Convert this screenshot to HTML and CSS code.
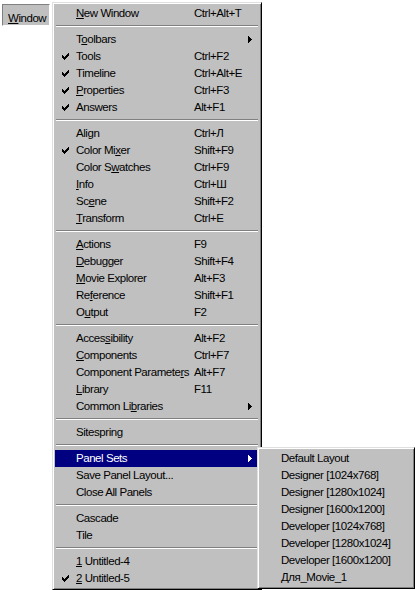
FILE: index.html
```html
<!DOCTYPE html>
<html>
<head>
<meta charset="utf-8">
<link rel="stylesheet" href="styles.css">
</head>
<body>
<div class="screen">
  <div class="menubar-item"><u>W</u>indow</div>
  <div class="menu">
    <div class="item"><span class="chk"></span><span class="label"><u>N</u>ew Window</span><span class="key">Ctrl+Alt+T</span></div>
    <div class="sep"></div>
    <div class="item"><span class="chk"></span><span class="label">T<u>o</u>olbars</span><span class="key"></span><svg class="arr" viewBox="0 0 4 7" width="4" height="7"><path d="M0 0h1v7h-1zM1 1h1v5h-1zM2 2h1v3h-1zM3 3h1v1h-1z"/></svg></div>
    <div class="item"><svg class="chk" viewBox="0 0 7 7" width="7" height="7"><path d="M6 0h1v1h-1zM5 1h2v1h-2zM0 2h1v1h-1zM4 2h3v1h-3zM0 3h2v1h-2zM3 3h3v1h-3zM0 4h5v1h-5zM1 5h3v1h-3zM2 6h1v1h-1z"/></svg><span class="label">Tools</span><span class="key">Ctrl+F2</span></div>
    <div class="item"><svg class="chk" viewBox="0 0 7 7" width="7" height="7"><path d="M6 0h1v1h-1zM5 1h2v1h-2zM0 2h1v1h-1zM4 2h3v1h-3zM0 3h2v1h-2zM3 3h3v1h-3zM0 4h5v1h-5zM1 5h3v1h-3zM2 6h1v1h-1z"/></svg><span class="label">Timeline</span><span class="key">Ctrl+Alt+E</span></div>
    <div class="item"><svg class="chk" viewBox="0 0 7 7" width="7" height="7"><path d="M6 0h1v1h-1zM5 1h2v1h-2zM0 2h1v1h-1zM4 2h3v1h-3zM0 3h2v1h-2zM3 3h3v1h-3zM0 4h5v1h-5zM1 5h3v1h-3zM2 6h1v1h-1z"/></svg><span class="label"><u>P</u>roperties</span><span class="key">Ctrl+F3</span></div>
    <div class="item"><svg class="chk" viewBox="0 0 7 7" width="7" height="7"><path d="M6 0h1v1h-1zM5 1h2v1h-2zM0 2h1v1h-1zM4 2h3v1h-3zM0 3h2v1h-2zM3 3h3v1h-3zM0 4h5v1h-5zM1 5h3v1h-3zM2 6h1v1h-1z"/></svg><span class="label">Answers</span><span class="key">Alt+F1</span></div>
    <div class="sep"></div>
    <div class="item"><span class="chk"></span><span class="label">Ali<u>g</u>n</span><span class="key">Ctrl+Л</span></div>
    <div class="item"><svg class="chk" viewBox="0 0 7 7" width="7" height="7"><path d="M6 0h1v1h-1zM5 1h2v1h-2zM0 2h1v1h-1zM4 2h3v1h-3zM0 3h2v1h-2zM3 3h3v1h-3zM0 4h5v1h-5zM1 5h3v1h-3zM2 6h1v1h-1z"/></svg><span class="label">Color Mi<u>x</u>er</span><span class="key">Shift+F9</span></div>
    <div class="item"><span class="chk"></span><span class="label">Color S<u>w</u>atches</span><span class="key">Ctrl+F9</span></div>
    <div class="item"><span class="chk"></span><span class="label"><u>I</u>nfo</span><span class="key">Ctrl+Ш</span></div>
    <div class="item"><span class="chk"></span><span class="label">Sc<u>e</u>ne</span><span class="key">Shift+F2</span></div>
    <div class="item"><span class="chk"></span><span class="label"><u>T</u>ransform</span><span class="key">Ctrl+E</span></div>
    <div class="sep"></div>
    <div class="item"><span class="chk"></span><span class="label"><u>A</u>ctions</span><span class="key">F9</span></div>
    <div class="item"><span class="chk"></span><span class="label"><u>D</u>ebugger</span><span class="key">Shift+F4</span></div>
    <div class="item"><span class="chk"></span><span class="label"><u>M</u>ovie Explorer</span><span class="key">Alt+F3</span></div>
    <div class="item"><span class="chk"></span><span class="label">Re<u>f</u>erence</span><span class="key">Shift+F1</span></div>
    <div class="item"><span class="chk"></span><span class="label">O<u>u</u>tput</span><span class="key">F2</span></div>
    <div class="sep"></div>
    <div class="item"><span class="chk"></span><span class="label">Acces<u>s</u>ibility</span><span class="key">Alt+F2</span></div>
    <div class="item"><span class="chk"></span><span class="label"><u>C</u>omponents</span><span class="key">Ctrl+F7</span></div>
    <div class="item"><span class="chk"></span><span class="label">Component Paramete<u>r</u>s</span><span class="key">Alt+F7</span></div>
    <div class="item"><span class="chk"></span><span class="label"><u>L</u>ibrary</span><span class="key">F11</span></div>
    <div class="item"><span class="chk"></span><span class="label">Common Li<u>b</u>raries</span><span class="key"></span><svg class="arr" viewBox="0 0 4 7" width="4" height="7"><path d="M0 0h1v7h-1zM1 1h1v5h-1zM2 2h1v3h-1zM3 3h1v1h-1z"/></svg></div>
    <div class="sep"></div>
    <div class="item"><span class="chk"></span><span class="label">Sitespring</span><span class="key"></span></div>
    <div class="sep"></div>
    <div class="item active"><span class="chk"></span><span class="label">Panel Sets</span><span class="key"></span><svg class="arr" viewBox="0 0 4 7" width="4" height="7"><path d="M0 0h1v7h-1zM1 1h1v5h-1zM2 2h1v3h-1zM3 3h1v1h-1z"/></svg></div>
    <div class="item"><span class="chk"></span><span class="label">Save Panel Layout...</span><span class="key"></span></div>
    <div class="item"><span class="chk"></span><span class="label">Close All Panels</span><span class="key"></span></div>
    <div class="sep"></div>
    <div class="item"><span class="chk"></span><span class="label">Cascade</span><span class="key"></span></div>
    <div class="item"><span class="chk"></span><span class="label">Tile</span><span class="key"></span></div>
    <div class="sep"></div>
    <div class="item"><span class="chk"></span><span class="label"><u>1</u> Untitled-4</span><span class="key"></span></div>
    <div class="item"><svg class="chk" viewBox="0 0 7 7" width="7" height="7"><path d="M6 0h1v1h-1zM5 1h2v1h-2zM0 2h1v1h-1zM4 2h3v1h-3zM0 3h2v1h-2zM3 3h3v1h-3zM0 4h5v1h-5zM1 5h3v1h-3zM2 6h1v1h-1z"/></svg><span class="label"><u>2</u> Untitled-5</span><span class="key"></span></div>

    <div class="submenu">
      <div class="sub-item">Default Layout</div>
      <div class="sub-item">Designer [1024x768]</div>
      <div class="sub-item">Designer [1280x1024]</div>
      <div class="sub-item">Designer [1600x1200]</div>
      <div class="sub-item">Developer [1024x768]</div>
      <div class="sub-item">Developer [1280x1024]</div>
      <div class="sub-item">Developer [1600x1200]</div>
      <div class="sub-item">Для_Movie_1</div>
    </div>
  </div>
</div>
</body>
</html>
```

FILE: styles.css
```css
html, body {
  margin: 0;
  background: #fff;
}
body {
  font-family: "Liberation Sans", Arial, "Noto Sans", sans-serif;
  font-size: 11.5px;
  letter-spacing: -0.45px;
  color: #000;
  width: 415px;
  height: 590px;
  overflow: hidden;
}
u {
  text-decoration: underline;
  text-underline-offset: 1px;
}
.screen {
  display: flex;
  align-items: flex-start;
  gap: 2px;
  padding: 2px 0 0 2px;
}
.menubar-item {
  box-sizing: border-box;
  width: 48px;
  height: 22px;
  margin-top: 2px;
  background: #c0c0c0;
  border: 1px solid;
  border-color: #808080 #fff #fff #808080;
  padding: 7px 0 0 5px;
  line-height: 13px;
  white-space: nowrap;
}
.menu {
  position: relative;
  box-sizing: border-box;
  width: 210px;
  background: #c0c0c0;
  border: 1px solid;
  border-color: #dfdfdf #000 #000 #dfdfdf;
  box-shadow: inset 1px 1px 0 #fff, inset -1px -1px 0 #808080;
  padding: 2px;
}
.item {
  display: grid;
  grid-template-columns: 21px 118px 54px 11px;
  height: 17px;
  line-height: 16px;
  white-space: nowrap;
}
.item.active {
  background: #000080;
  color: #fff;
}
.chk {
  margin: 5px 0 0 7px;
  fill: currentColor;
  shape-rendering: crispEdges;
}
.arr {
  margin-top: 5px;
  fill: currentColor;
  shape-rendering: crispEdges;
}
.sep {
  box-sizing: border-box;
  height: 2px;
  margin: 3px 1px 4px;
  border-top: 1px solid #808080;
  border-bottom: 1px solid #fff;
}
.submenu {
  position: absolute;
  left: 204px;
  top: 444px;
  box-sizing: border-box;
  width: 158px;
  background: #c0c0c0;
  border: 1px solid;
  border-color: #dfdfdf #000 #000 #dfdfdf;
  box-shadow: inset 1px 1px 0 #fff, inset -1px -1px 0 #808080;
  padding: 2px;
}
.sub-item {
  height: 17px;
  line-height: 16px;
  padding-left: 21px;
  white-space: nowrap;
}
```
